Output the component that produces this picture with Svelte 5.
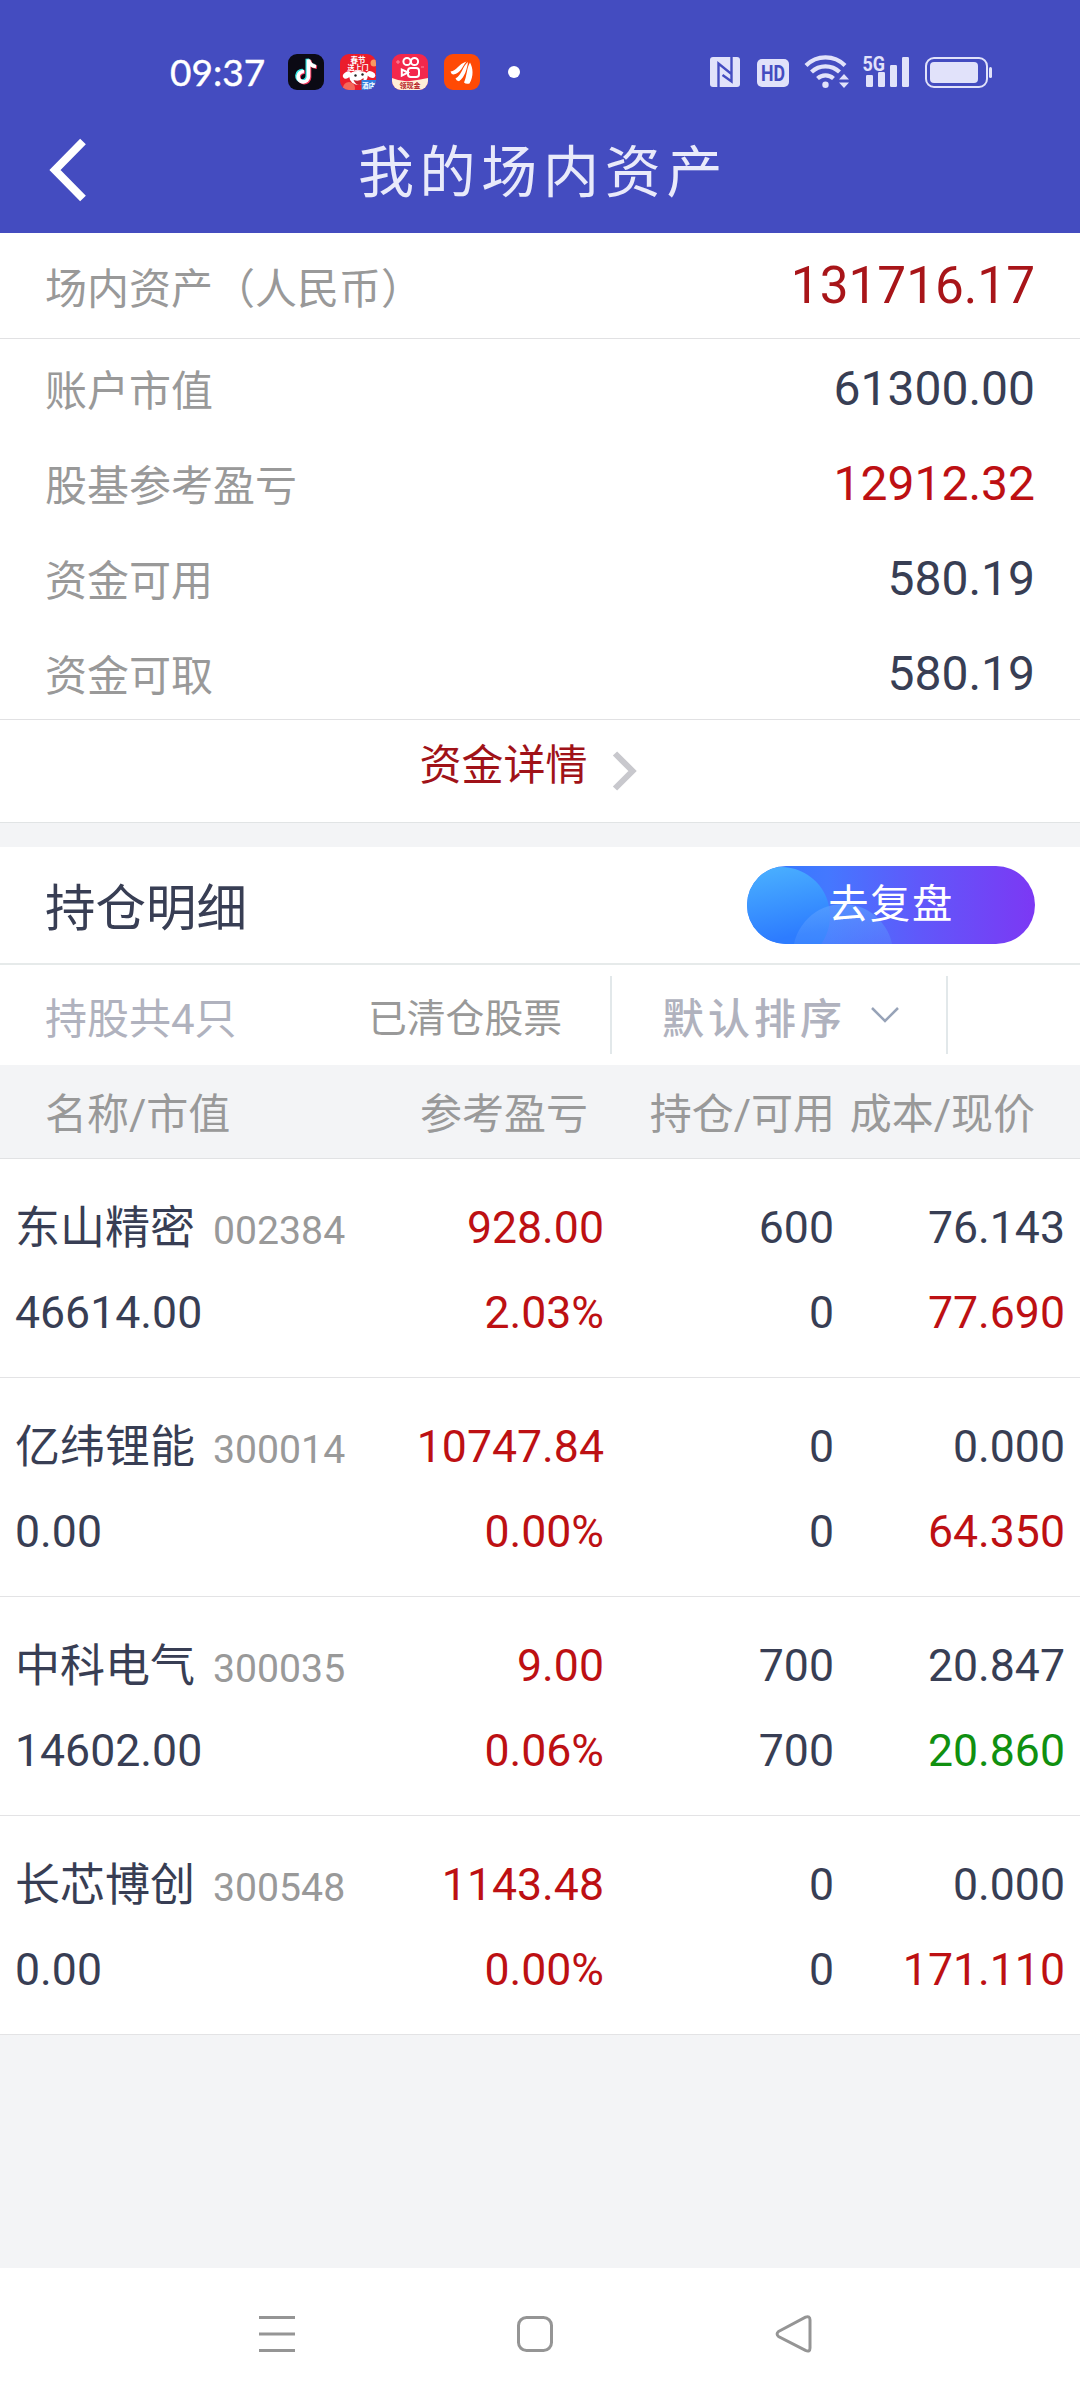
<script lang="ts">
  interface Holding {
    name: string;
    code: string;
    value: string;
    profit: string;
    rate: string;
    amount: string;
    usable: string;
    cost: string;
    price: string;
    /** 现价显示为绿色 */
    down?: boolean;
  }

  const funds = [
    { label: '账户市值', value: '61300.00', red: false },
    { label: '股基参考盈亏', value: '12912.32', red: true },
    { label: '资金可用', value: '580.19', red: false },
    { label: '资金可取', value: '580.19', red: false },
  ];

  const holdings: Holding[] = [
    { name: '东山精密', code: '002384', value: '46614.00', profit: '928.00', rate: '2.03%', amount: '600', usable: '0', cost: '76.143', price: '77.690' },
    { name: '亿纬锂能', code: '300014', value: '0.00', profit: '10747.84', rate: '0.00%', amount: '0', usable: '0', cost: '0.000', price: '64.350' },
    { name: '中科电气', code: '300035', value: '14602.00', profit: '9.00', rate: '0.06%', amount: '700', usable: '700', cost: '20.847', price: '20.860', down: true },
    { name: '长芯博创', code: '300548', value: '0.00', profit: '1143.48', rate: '0.00%', amount: '0', usable: '0', cost: '0.000', price: '171.110' },
  ];

  const note = 'M16 17.5a5.2 5.2 0 1 0 4.500 5.300V5.500c.5 4 3 6.500 7.500 7';
</script>

<div class="page">
  <header class="top">
    <!-- 系统状态栏 -->
    <div class="status">
      <span class="time">09:37</span>
      <div class="apps">
        <svg width="36" height="36" viewBox="0 0 36 36">
          <rect width="36" height="36" rx="9" fill="#0b0a14" />
          <g fill="none" stroke-width="3.6">
            <path d={note} stroke="#35e6e4" transform="translate(-1.2 -.8)" />
            <path d={note} stroke="#f4365c" transform="translate(1 .8)" />
            <path d={note} stroke="#fff" />
          </g>
        </svg>
        <svg width="36" height="36" viewBox="0 0 36 36">
          <defs><clipPath id="jd"><rect width="36" height="36" rx="9" /></clipPath></defs>
          <g clip-path="url(#jd)">
            <rect width="36" height="36" fill="#ea1d2c" />
            <circle cx="34" cy="9" r="3.5" fill="#f79a62" />
            <text x="18" y="8.5" class="tiny" font-size="7.5">春节</text>
            <text x="18" y="16" class="tiny" font-size="7">送上门</text>
            <ellipse cx="7" cy="21" rx="4.5" ry="3" fill="#fff" transform="rotate(-35 7 21)" />
            <ellipse cx="31" cy="20.5" rx="4.5" ry="3" fill="#fff" transform="rotate(25 31 20.5)" />
            <path d="M9 22Q10 17 18 17T28 20Q28 28 20 31Q10 31 9 22z" fill="#fff" />
            <circle cx="15.5" cy="21.5" r="1.2" fill="#222" />
            <circle cx="22.5" cy="20.5" r="1.2" fill="#222" />
            <path d="M13.500 26q6 2 10-2q1 6-4 7q-4 0-6-5z" fill="#c9252e" />
            <circle cx="9" cy="34" r="6" fill="#f4685a" />
            <rect x="21.5" y="26" width="15" height="10" fill="#2f7fe0" />
            <text x="28.5" y="33.5" class="tiny" font-size="6.5">酒店</text>
          </g>
        </svg>
        <svg width="36" height="36" viewBox="0 0 36 36">
          <defs><clipPath id="ks"><rect width="36" height="36" rx="9" /></clipPath></defs>
          <g clip-path="url(#ks)">
            <rect width="36" height="36" fill="#f3284c" />
            <g fill="none" stroke="#fff" stroke-width="2">
              <circle cx="15" cy="7.5" r="3.6" />
              <circle cx="22.5" cy="7.5" r="3.6" />
              <rect x="16" y="14" width="11" height="9" rx="2.8" />
              <path d="M16 18.500l-6.200-3v6.200z" />
            </g>
            <path d="M4 8h4M6 6v4M29 13h3" stroke="#f98aa0" stroke-width="1" />
            <path d="M0 24q9 4 18 3t18-3v12H0z" fill="#fff0d8" />
            <text x="18" y="34" class="tiny" font-size="7" fill="#b51a24">领现金</text>
          </g>
        </svg>
        <svg width="36" height="36" viewBox="0 0 36 36">
          <rect width="36" height="36" rx="9" fill="#ff4a05" />
          <g fill="#fff">
            <path d="M6.500 17.500C13 17 14 10 22.500 7.500C18.500 12 17 19 9.500 20.500Q7 20 6.500 17.500z" />
            <path d="M11.500 24.500C18 21 18.500 12 24 8C23 15 21 23 15 27.200Q12.500 27 11.500 24.500z" />
            <path d="M20 28.500C23 22 22.500 14 26 8.500C29 14 30 22 25.500 29.500Q22 30.500 20 28.500z" />
          </g>
        </svg>
      </div>
      <i class="dot"></i>

      <svg class="sys" width="284" height="50" viewBox="710 47 284 50" fill="#e1e2fa">
        <!-- NFC -->
        <rect x="710" y="57" width="30" height="30" rx="3" />
        <path d="M718.500 87V63.500L731.500 74V81.500L722.500 75M731.500 57V81.500" fill="none" stroke="#444cc0" stroke-width="2.4" />
        <!-- HD -->
        <rect x="757" y="59" width="32" height="28" rx="5" />
        <text x="773" y="81" class="hd" textLength="24" lengthAdjust="spacingAndGlyphs">HD</text>
        <!-- Wi-Fi -->
        <g fill="none" stroke="#e1e2fa" stroke-width="4.2">
          <path d="M806 65.500a27.500 27.500 0 0 1 39 0" />
          <path d="M811.500 72a20 20 0 0 1 28 0" />
          <path d="M817.500 78.500a12 12 0 0 1 16 0" />
        </g>
        <circle cx="825.5" cy="84.8" r="3.2" />
        <path d="M839 79.500l5-5.500 5 5.500zM839 82.500h10l-5 5.500z" />
        <!-- 信号 -->
        <text x="862.5" y="70.5" class="g5" textLength="22.5" lengthAdjust="spacingAndGlyphs">5G</text>
        <rect x="866" y="75" width="7" height="12" rx="1.2" />
        <rect x="878" y="72" width="7" height="15" rx="1.2" />
        <rect x="890" y="65" width="7" height="22" rx="1.2" />
        <rect x="902" y="57" width="7" height="30" rx="1.2" />
        <!-- 电池 -->
        <rect x="926" y="58" width="61" height="29" rx="8" fill="none" stroke="#e1e2fa" stroke-width="2" />
        <rect x="930" y="62" width="48" height="21" rx="4" />
        <rect x="989" y="67" width="3" height="11" rx="1.5" />
      </svg>
    </div>

    <div class="nav">
      <button type="button" class="back" aria-label="返回">
        <svg width="40" height="66" viewBox="0 0 40 66">
          <path d="M34 4.500L6 33L34 61.500" fill="none" stroke="#fff" stroke-width="8" />
        </svg>
      </button>
      <h1>我的场内资产</h1>
    </div>
  </header>

  <!-- 资产概览 -->
  <section class="assets">
    <div class="total">
      <span class="label">场内资产（人民币）</span>
      <span class="total-num">131716.17</span>
    </div>
    <div class="funds">
      {#each funds as f}
        <div class="fund">
          <span class="label">{f.label}</span>
          <span class="num" class:red={f.red}>{f.value}</span>
        </div>
      {/each}
    </div>
    <div class="detail">
      <span>资金详情</span>
      <svg width="26" height="40" viewBox="0 0 26 40">
        <path d="M3 2.500L20.500 20L3 37.500" fill="none" stroke="#c8c8cd" stroke-width="6" />
      </svg>
    </div>
  </section>

  <!-- 持仓 -->
  <section class="positions">
    <div class="pos-head">
      <h2>持仓明细</h2>
      <button type="button" class="review">
        <svg width="288" height="78" viewBox="0 0 288 78" aria-hidden="true">
          <defs>
            <linearGradient id="bubble" x1="0" y1="0" x2="0.2" y2="1">
              <stop offset="0" stop-color="#4cb4ff" />
              <stop offset="0.8" stop-color="#2d7cff" />
            </linearGradient>
            <linearGradient id="bubble2" x1="0" y1="0" x2="0" y2="1">
              <stop offset="0" stop-color="#62a4ff" stop-opacity="0.6" />
              <stop offset="0.5" stop-color="#5a98ff" stop-opacity="0.2" />
            </linearGradient>
          </defs>
          <circle cx="34" cy="50" r="49" fill="url(#bubble)" />
          <circle cx="96" cy="88" r="50" fill="url(#bubble2)" />
        </svg>
        <span>去复盘</span>
      </button>
    </div>

    <div class="filter">
      <span class="count">持股共4只</span>
      <span class="cleared">已清仓股票</span>
      <div class="sort">
        <span>默认排序</span>
        <svg width="30" height="18" viewBox="0 0 30 18">
          <path d="M2 2L15 15L28 2" fill="none" stroke="#97a3b8" stroke-width="2.5" />
        </svg>
      </div>
    </div>

    <div class="cols">
      <span>名称/市值</span>
      <span>参考盈亏</span>
      <span>持仓/可用</span>
      <span>成本/现价</span>
    </div>

    {#each holdings as h (h.code)}
      <div class="row">
        <span class="name"><b>{h.name}</b><em>{h.code}</em></span>
        <span class="red">{h.profit}</span>
        <span>{h.amount}</span>
        <span>{h.cost}</span>
        <span class="value">{h.value}</span>
        <span class="red">{h.rate}</span>
        <span>{h.usable}</span>
        <span class={h.down ? 'green' : 'red'}>{h.price}</span>
      </div>
    {/each}
  </section>

  <!-- 系统导航键 -->
  <footer class="keys">
    <svg width="40" height="40" viewBox="0 0 40 40">
      <path d="M2 3.500H38M2 20H38M2 36.500H38" />
    </svg>
    <svg width="40" height="40" viewBox="0 0 40 40">
      <rect x="3.5" y="3.5" width="33" height="33" rx="8" />
    </svg>
    <svg width="40" height="40" viewBox="0 0 40 40">
      <path d="M5.500 17.500L32.500 3.200Q37 1.500 37 6V34Q37 38.500 32.500 36.400L5.500 22.500Q2.700 20 5.500 17.500z" />
    </svg>
  </footer>
</div>

<style>
  :global(body) {
    background: #f3f4f6;
  }

  .page {
    width: 1080px;
    height: 2400px;
    display: flex;
    flex-direction: column;
    overflow: hidden;
    background: #f3f4f6;
    color: #383e54;
    font-family: Roboto, 'Noto Sans CJK SC', sans-serif;
  }

  svg {
    display: block;
    flex-shrink: 0;
  }

  button {
    border: 0;
    padding: 0;
    background: none;
    font: inherit;
    color: inherit;
  }

  .top {
    height: 233px;
    background: #444cc0;
    color: #fff;
  }

  .status {
    height: 110px;
    padding: 34px 86px 0 170px;
    box-sizing: border-box;
    display: flex;
    align-items: center;
  }

  .time {
    width: 118px;
    font-family: Lato, Roboto, sans-serif;
    font-size: 37px;
    line-height: 76px;
    -webkit-text-stroke: 0.4px #fff;
  }

  .apps {
    display: flex;
    gap: 16px;
  }

  .tiny {
    text-anchor: middle;
    font-family: 'Noto Sans CJK SC', sans-serif;
    font-weight: 700;
  }

  .tiny:not([fill]) {
    fill: #fff;
  }

  .dot {
    width: 12px;
    height: 12px;
    margin-left: 28px;
    border-radius: 50%;
    background: #fff;
  }

  .sys {
    margin-left: auto;
    overflow: visible;
  }

  .hd {
    font: 700 22px Roboto, sans-serif;
    text-anchor: middle;
    fill: #444cc0;
  }

  .g5 {
    font: 700 21px Roboto, sans-serif;
  }

  .nav {
    height: 123px;
    display: grid;
    grid-template-columns: 120px 1fr 114px;
    align-items: center;
  }

  .back {
    padding: 0 0 3px 49px;
  }

  h1 {
    margin: 2px 0 0;
    text-align: center;
    font-size: 56px;
    font-weight: 400;
    letter-spacing: 5.7px;
    line-height: 80px;
    color: #e9eafa;
  }

  .assets {
    background: #fff;
    border-bottom: 1px solid #e1e4e5;
  }

  .total,
  .fund {
    display: flex;
    justify-content: space-between;
    align-items: center;
    padding: 0 45px;
  }

  .total {
    height: 105px;
    border-bottom: 1px solid #e1e1e3;
  }

  .label {
    font-size: 42px;
    color: #999;
  }

  .total-num {
    margin-top: -1px;
    font-size: 51.3px;
    color: #a81519;
  }

  .funds {
    height: 381px;
    padding-top: 2px;
    box-sizing: border-box;
    border-bottom: 1px solid #e1e1e3;
  }

  .fund {
    height: 95px;
  }

  .fund .label {
    margin-top: -2px;
  }

  .num {
    font-size: 48px;
  }

  .red {
    color: #bd1013;
  }

  .green {
    color: #109010;
  }

  .detail {
    height: 102px;
    padding-right: 23px;
    display: flex;
    justify-content: center;
    gap: 24px;
    font-size: 42px;
    line-height: 92px;
    color: #a01218;
  }

  .detail svg {
    margin-top: 31px;
  }

  .positions {
    margin-top: 24px;
    background: #fff;
  }

  .pos-head {
    height: 116px;
    padding: 0 45px;
    display: flex;
    align-items: center;
    justify-content: space-between;
    border-bottom: 2px solid #e6eaea;
  }

  h2 {
    margin: -2px 0 0;
    font-size: 50.5px;
    font-weight: 400;
  }

  .review {
    width: 288px;
    height: 78px;
    display: grid;
    border-radius: 39px;
    overflow: hidden;
    background: linear-gradient(90deg, #2d7aff 0%, #4478ff 28%, #6058fa 60%, #7c38f4 100%);
    color: #fff;
  }

  .review svg,
  .review span {
    grid-area: 1 / 1;
  }

  .review span {
    font-size: 40.3px;
    letter-spacing: 1.6px;
    line-height: 78px;
  }

  .filter {
    height: 100px;
    display: flex;
    align-items: center;
    padding-left: 45px;
  }

  .count {
    width: 323px;
    font-size: 42px;
    color: #b0b2be;
  }

  .cleared {
    width: 242px;
    font-size: 38.8px;
    color: #999;
  }

  .sort {
    width: 284px;
    height: 78px;
    padding-left: 50px;
    display: flex;
    align-items: center;
    gap: 24px;
    border: solid #e2e8ea;
    border-width: 0 2px;
    font-size: 42px;
    font-weight: 500;
    letter-spacing: 4px;
    color: #b0b2be;
  }

  .cols {
    height: 91px;
    padding: 0 45px 2px;
    display: grid;
    grid-template-columns: 1fr 211px 247px 200px;
    align-items: center;
    background: #f3f4f6;
    border-bottom: 1px solid #e1e2e4;
    font-size: 42px;
    color: #999;
    text-align: right;
    white-space: nowrap;
  }

  .cols span:first-child {
    text-align: left;
  }

  .row {
    height: 219px;
    padding: 26px 15px 0;
    box-sizing: border-box;
    display: grid;
    grid-template-columns: 1fr 210px 230px 231px;
    grid-template-rows: 85px 85px;
    align-items: center;
    border-bottom: 1px solid #e3e3e5;
    font-size: 44.6px;
    text-align: right;
    white-space: nowrap;
  }

  .name,
  .value {
    text-align: left;
  }

  .name {
    margin-top: -7px;
  }

  .name b {
    font-size: 45px;
    font-weight: 400;
  }

  .name em {
    margin-left: 18px;
    font-style: normal;
    font-size: 39.2px;
    color: #999;
  }

  .keys {
    margin-top: auto;
    height: 132px;
    padding: 0 267px 0 257px;
    display: flex;
    justify-content: space-between;
    align-items: center;
    background: #fff;
  }

  .keys svg {
    fill: none;
    stroke: #959595;
    stroke-width: 3;
  }
</style>
